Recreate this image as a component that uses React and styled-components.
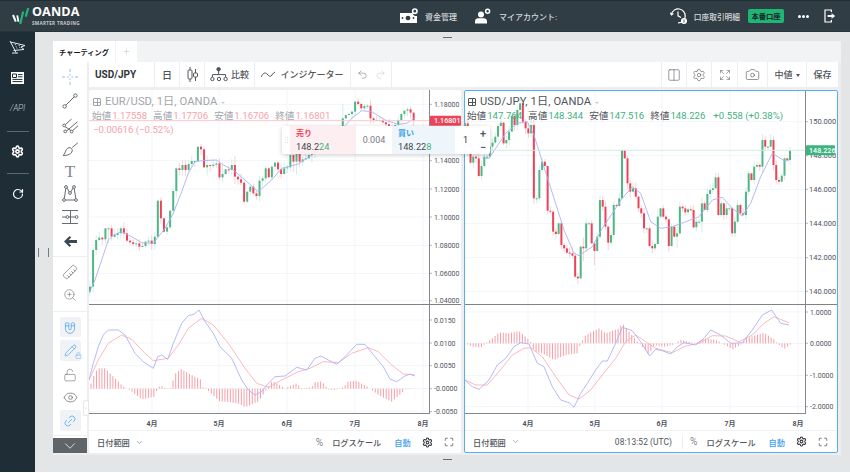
import React from 'react'
import styled, { createGlobalStyle } from 'styled-components'
import {
  Plus, Undo2, Redo2, Columns2, Settings, Expand, Maximize, Camera, ChevronDown, ChevronLeft,
  ZoomIn, Ruler, Magnet, LockOpen, Eye, Link2, RotateCw, Pencil, Lock,
} from 'lucide-react'

// chart data is read off the picture in 3x zoom coordinates, toPx brings it back to pane pixels
const UP = '#4fb786'
const DOWN = '#ec4359'

const eurCloses = [590, 480, 450, 443, 448, 415, 415, 440, 435, 430, 415, 430, 452, 457, 462, 460, 470, 468, 455, 452, 462, 440, 332, 385, 425, 412, 362, 303, 235, 240, 225, 240, 222, 213, 213, 170, 178, 232, 225, 228, 224, 220, 262, 252, 238, 240, 225, 260, 268, 278, 335, 305, 290, 310, 318, 272, 265, 235, 262, 230, 218, 238, 252, 235, 232, 195, 215, 190, 215, 208, 205, 195, 190, 175, 165, 150, 140, 130, 125, 120, 118, 110, 85, 75, 72, 65, 35, 42, 55, 48, 47, 85, 90, 92, 90, 97, 103, 108, 110, 105, 90, 72, 62, 58, 68, 93]
const jpyCloses = [100, 190, 218, 200, 205, 258, 228, 200, 200, 170, 158, 140, 108, 98, 160, 150, 125, 78, 105, 60, 40, 95, 115, 130, 105, 325, 325, 240, 215, 228, 362, 365, 425, 432, 400, 465, 475, 488, 490, 497, 560, 565, 470, 475, 400, 400, 460, 483, 440, 330, 350, 410, 458, 435, 345, 348, 325, 180, 205, 280, 305, 295, 320, 355, 370, 415, 415, 468, 475, 462, 380, 355, 380, 388, 468, 410, 440, 430, 350, 355, 367, 358, 360, 412, 395, 395, 340, 360, 312, 300, 295, 262, 375, 340, 375, 355, 355, 430, 395, 345, 370, 375, 305, 250, 270, 230, 225, 230, 150, 170, 170, 150, 225, 270, 275, 257, 205, 210, 180]

const eurMa = [[12, 610], [30, 570], [50, 510], [70, 450], [85, 435], [110, 425], [140, 440], [170, 458], [205, 460], [240, 415], [265, 370], [290, 305], [310, 250], [330, 215], [350, 212], [395, 210], [415, 225], [445, 240], [480, 270], [520, 305], [560, 270], [590, 235], [640, 222], [680, 195], [760, 130], [800, 85], [830, 62], [860, 65], [900, 90], [940, 103], [965, 100], [988, 85]]
const jpyMa = [[70, 205], [90, 205], [110, 175], [140, 130], [175, 100], [205, 95], [225, 135], [250, 215], [285, 325], [315, 420], [345, 490], [360, 497], [400, 470], [430, 415], [460, 370], [490, 325], [520, 290], [545, 310], [575, 395], [605, 415], [640, 410], [680, 395], [720, 380], [760, 330], [790, 322], [820, 355], [850, 378], [875, 340], [905, 260], [940, 190], [975, 212], [990, 212]]

const eurMacd = [[12, 240], [25, 190], [40, 140], [55, 105], [70, 90], [100, 90], [120, 105], [150, 160], [175, 185], [205, 205], [218, 170], [230, 165], [248, 178], [265, 130], [290, 70], [310, 47], [328, 42], [342, 30], [360, 65], [385, 100], [405, 140], [440, 175], [470, 240], [490, 270], [510, 285], [530, 275], [550, 250], [570, 230], [600, 228], [635, 202], [665, 210], [690, 175], [708, 168], [730, 180], [755, 193], [780, 170], [815, 133], [840, 133], [870, 170], [895, 200], [915, 237], [935, 245], [960, 228], [975, 222], [990, 228]]
const eurSignal = [[12, 240], [40, 180], [70, 130], [110, 105], [140, 118], [175, 155], [205, 182], [250, 175], [280, 135], [310, 85], [350, 55], [385, 75], [430, 130], [480, 205], [515, 250], [550, 262], [600, 235], [640, 215], [675, 205], [715, 185], [760, 188], [800, 160], [850, 143], [880, 155], [920, 195], [955, 222], [990, 225]]
const eurHist = [[15, 266], [20, 240], [38, 205], [60, 205], [85, 230], [110, 255], [125, 266], [135, 270], [170, 298], [210, 290], [218, 262], [230, 258], [250, 268], [258, 262], [270, 222], [288, 207], [320, 225], [350, 240], [355, 266], [365, 268], [405, 305], [425, 305], [465, 312], [480, 322], [520, 305], [545, 268], [560, 245], [570, 247], [600, 265], [635, 250], [650, 265], [680, 262], [690, 247], [710, 244], [730, 268], [750, 270], [775, 262], [790, 245], [815, 242], [850, 262], [880, 285], [920, 305], [950, 280], [960, 268], [990, 266]]
const jpyMacd = [[18, 240], [40, 260], [60, 268], [90, 240], [115, 195], [140, 175], [165, 140], [185, 128], [210, 132], [235, 190], [255, 200], [280, 260], [305, 300], [330, 308], [345, 322], [365, 280], [385, 250], [410, 210], [430, 183], [445, 183], [470, 130], [490, 82], [520, 92], [545, 125], [572, 168], [590, 148], [610, 152], [635, 162], [655, 140], [675, 128], [710, 135], [735, 115], [755, 90], [785, 105], [815, 130], [850, 128], [880, 90], [910, 45], [938, 30], [965, 70], [990, 75]]
const jpySignal = [[18, 240], [50, 255], [85, 255], [120, 215], [160, 165], [195, 145], [215, 143], [250, 170], [290, 230], [330, 285], [360, 297], [395, 270], [430, 225], [470, 175], [500, 125], [530, 105], [560, 125], [590, 145], [640, 158], [680, 138], [720, 130], [760, 107], [800, 108], [840, 125], [880, 105], [915, 70], [945, 50], [990, 68]]
const jpyHist = [[18, 130], [40, 140], [65, 143], [80, 130], [100, 115], [120, 97], [150, 100], [180, 93], [210, 120], [218, 130], [225, 155], [250, 160], [285, 180], [320, 165], [355, 160], [365, 130], [380, 105], [420, 85], [440, 100], [480, 85], [490, 70], [510, 95], [535, 125], [550, 140], [570, 165], [585, 135], [620, 140], [640, 135], [665, 120], [690, 125], [710, 130], [735, 115], [770, 120], [790, 130], [820, 148], [845, 135], [860, 115], [915, 98], [945, 118], [955, 130], [975, 147], [995, 133]]

const random = (seed) => {
  let s = seed
  return () => {
    s = (s * 16807) % 2147483647
    return s / 2147483647
  }
}

const makeCandles = (closes, first, last, seed) => {
  const rnd = random(seed)
  const step = (last - first) / (closes.length - 1)
  return closes.map((close, i) => {
    const open = i === 0 ? close + 15 : closes[i - 1]
    const r = rnd()
    const reach = r > 0.85 ? 45 : 18
    return {
      x: first + i * step,
      open,
      close,
      high: Math.min(open, close) - rnd() * reach,
      low: Math.max(open, close) + rnd() * reach,
    }
  })
}

const interp = (list, x) => {
  for (let i = 1; i < list.length; i++) {
    if (x <= list[i][0]) {
      const [x0, y0] = list[i - 1]
      const [x1, y1] = list[i]
      return y0 + ((x - x0) / (x1 - x0)) * (y1 - y0)
    }
  }
  return list[list.length - 1][1]
}

const toPoints = (list, ox, oy) => list.map(([x, y]) => `${(x / 3 - ox).toFixed(1)},${(y / 3 - oy).toFixed(1)}`).join(' ')

const GlobalStyle = createGlobalStyle`
  html, body { margin: 0; padding: 0; background: #fff; }
  body { font-family: Roboto, "Noto Sans CJK JP", sans-serif; }
  * { box-sizing: border-box; }
`

const Page = styled.div`
  position: relative;
  width: 850px;
  height: 472px;
  display: flex;
  flex-direction: column;
  overflow: hidden;
  font-family: Roboto, "Noto Sans CJK JP", sans-serif;
`

const TopBar = styled.header`
  height: 32px;
  flex: none;
  display: flex;
  align-items: center;
  padding: 0 15px 0 12px;
  background: #313d45;
  border-top: 1px solid #232e35;
  border-bottom: 1px solid #29343b;
  color: #d5d9dc;
`

const Logo = styled.div`
  display: flex;
  align-items: center;
  gap: 2px;
  width: 68px;
`

const LogoWord = styled.div`
  display: flex;
  flex-direction: column;
  color: #fff;
  font-family: "Open Sans", sans-serif;
  font-weight: 700;
  line-height: 1;
  white-space: nowrap;
`

const LogoName = styled.span`
  font-size: 12.6px;
  letter-spacing: 0.1px;
`

const LogoSub = styled.span`
  font-size: 4.6px;
  letter-spacing: 0.3px;
  margin-top: 2px;
  color: #c6cbce;
`

const BarGroup = styled.div`
  display: flex;
  align-items: center;
  margin-left: ${(p) => p.$ml || 0};
`

const BarText = styled.span`
  font-size: ${(p) => p.$size || '8px'};
  font-weight: 500;
  margin-left: ${(p) => p.$ml || '6px'};
  white-space: nowrap;
`

const LiveBadge = styled.span`
  width: 36px;
  height: 14px;
  margin-left: 8px;
  display: flex;
  align-items: center;
  justify-content: center;
  background: #1fb673;
  border-radius: 2px;
  color: #16242c;
  font-size: 7.3px;
  font-weight: 700;
`

const Dots = styled.span`
  display: flex;
  gap: 1px;
  margin: 0 15px 0 14px;

  i {
    width: 3px;
    height: 3px;
    border-radius: 50%;
    background: #fff;
  }
`

const Body = styled.div`
  flex: 1;
  display: flex;
  min-height: 0;
`

const Sidebar = styled.nav`
  width: 35px;
  flex: none;
  display: flex;
  flex-direction: column;
  align-items: center;
  background: #1f2d37;
  color: #fff;
`

const SideItem = styled.div`
  height: ${(p) => p.$h || 30}px;
  display: flex;
  align-items: center;
  justify-content: center;
`

const SideRule = styled.div`
  width: 22px;
  height: 1px;
  margin: 8px 0 5px;
  background: #5c6870;
`

const ApiMark = styled.span`
  font-size: 8.5px;
  font-style: italic;
  font-weight: 300;
  letter-spacing: -0.2px;
  color: #c2c8cc;
`

const Main = styled.main`
  position: relative;
  flex: 1;
  min-width: 0;
  display: flex;
  flex-direction: column;
  padding: 9px 9px 0 18px;
  background: #e4e5e7;
`

const Handle = styled.span`
  position: absolute;
  left: 408px;
  top: ${(p) => p.$top}px;
  width: 9px;
  height: 1px;
  background: #6a6e72;
`

const SplitGrip = styled.span`
  position: absolute;
  left: 3px;
  top: 216px;
  width: 11px;
  height: 9px;
  border-left: 1px solid #777b7f;
  border-right: 1px solid #777b7f;
`

const TabStrip = styled.div`
  height: 21px;
  flex: none;
  display: flex;
  background: #f2f3f4;
`

const Tab = styled.div`
  width: ${(p) => p.$w}px;
  margin-right: 1px;
  display: flex;
  align-items: center;
  justify-content: center;
  background: #fff;
  color: ${(p) => (p.$muted ? '#a8acb0' : '#16191c')};
  font-size: 7.2px;
  font-weight: 700;
  white-space: nowrap;
`

const Workspace = styled.div`
  flex: none;
  height: 393px;
  display: flex;
  gap: 2px;
  padding: 0 3px 2px 0;
  background: #eceef0;
`

const ToolColumn = styled.aside`
  position: relative;
  width: 34px;
  flex: none;
  display: flex;
  flex-direction: column;
  background: #fff;
  color: #666b71;
`

const ToolGroup = styled.div`
  display: flex;
  flex-direction: column;
  padding: ${(p) => p.$pad};
  border-bottom: 1px solid #eceef0;
`

const ToolButton = styled.div`
  height: ${(p) => p.$h || 24}px;
  margin: ${(p) => p.$m || 0};
  display: flex;
  align-items: center;
  justify-content: center;
  color: ${(p) => (p.$active ? '#4aa3ef' : 'inherit')};
  ${(p) => p.$active && 'width: 21px; align-self: center; border-radius: 2px; background: #f0f2f5;'}
`

const TextTool = styled.span`
  font-family: "Liberation Serif", serif;
  font-size: 17px;
  line-height: 1;
  color: #83878c;
`

const CollapseTools = styled.div`
  height: 15px;
  margin-top: 2px;
  display: flex;
  align-items: center;
  justify-content: center;
  background: #5f6468;
  color: #fff;
`

const SideTab = styled.span`
  position: absolute;
  left: 30px;
  top: 338px;
  width: 6px;
  height: 16px;
  display: flex;
  align-items: center;
  justify-content: center;
  background: #fff;
  border: 1px solid #e4e6e8;
  border-radius: 2px;
  color: #9a9ea3;
`

const Content = styled.div`
  flex: 1;
  min-width: 0;
  display: flex;
  flex-direction: column;
  gap: 3px;
`

const Toolbar = styled.div`
  height: 25px;
  flex: none;
  display: flex;
  gap: 1px;
`

const ToolbarCell = styled.div`
  width: ${(p) => (p.$w ? `${p.$w}px` : 'auto')};
  flex: ${(p) => (p.$w ? 'none' : 1)};
  display: flex;
  align-items: center;
  justify-content: ${(p) => p.$justify || 'center'};
  gap: ${(p) => p.$gap || 4}px;
  padding: ${(p) => p.$pad || 0};
  background: #fff;
  color: #50555b;
  font-size: ${(p) => p.$size || 9}px;
  font-weight: 500;
  white-space: nowrap;
`

const Symbol = styled.span`
  font-size: 10px;
  font-weight: 700;
  color: #30353a;
`

const Charts = styled.div`
  position: relative;
  flex: none;
  height: 363px;
  display: flex;
  gap: 3px;
`

const Panel = styled.section`
  flex: 1;
  min-width: 0;
  display: flex;
  flex-direction: column;
  background: #fff;
  border-radius: 2px;
  border: ${(p) => (p.$focus ? '1px solid #58aef0' : 'none')};
`

const Pane = styled.div`
  position: relative;
  height: ${(p) => p.$h}px;
  flex: none;
`

const PaneRule = styled.div`
  height: 1px;
  flex: none;
  background: #7f8288;
`

const PlotSvg = styled.svg`
  display: block;
`

const AxisText = styled.text`
  font-family: Roboto, sans-serif;
  font-size: ${(p) => p.$size || 7}px;
  fill: #50535e;
`

const PriceTag = styled.text`
  font-family: Roboto, sans-serif;
  font-size: 7.2px;
  font-weight: 500;
  fill: #fff;
`

const MonthText = styled.text`
  font-family: Roboto, "Noto Sans CJK JP", sans-serif;
  font-size: 7px;
  font-weight: 700;
  fill: #50535e;
  text-anchor: middle;
`

const Legend = styled.div`
  position: absolute;
  left: ${(p) => p.$left}px;
  top: ${(p) => p.$top}px;
  font-size: 9.6px;
  line-height: 13.5px;
  white-space: nowrap;
  color: ${(p) => (p.$faded ? '#a2a6ab' : '#50555b')};
`

const LegendTitle = styled.div`
  display: flex;
  align-items: center;
  gap: 4px;
  height: 14px;
  font-size: 11.2px;
  letter-spacing: 0.1px;
`

const LegendBox = styled.span`
  width: 8px;
  height: 8px;
  margin-left: 1px;
  position: relative;
  border: 1px solid currentColor;
  border-radius: 1px;
  background:
    linear-gradient(currentColor, currentColor) center / 100% 1px no-repeat,
    linear-gradient(currentColor, currentColor) center / 1px 100% no-repeat;
`

const Caret = styled.span`
  width: 0;
  height: 0;
  margin-top: 1px;
  border-style: solid;
  border-color: ${(p) => p.$color || '#c8cbce'} transparent transparent;
  border-width: ${(p) => (p.$big ? '3px 2.5px 0' : '2.5px 2px 0')};
`

const Ohlc = styled.div`
  display: flex;
  gap: 6px;
`

const OhlcPair = styled.span`
  display: inline-flex;
  gap: 1px;
`

const Value = styled.span`
  color: ${(p) => p.$color};
  margin-left: ${(p) => p.$ml || 0};
`

const TimeScale = styled.div`
  height: 16px;
  flex: none;
  margin-top: 1px;
`

const Footer = styled.div`
  height: 22px;
  flex: 1;
  display: flex;
  align-items: center;
  padding: 0 9px 0 8px;
  border-top: 1px solid #eff1f3;
  color: #50555b;
  font-size: 8.2px;
  font-weight: 500;
`

const FootItem = styled.span`
  display: inline-flex;
  align-items: center;
  gap: 5px;
  margin-left: ${(p) => p.$ml || 0}px;
  color: ${(p) => p.$color || 'inherit'};
  white-space: nowrap;
`

const Percent = styled(FootItem)`
  font-size: 10px;
  font-weight: 300;
`

const FootDivider = styled.span`
  width: 1px;
  height: 14px;
  margin-left: 10px;
  background: #eceef0;
`

const Clock = styled.span`
  margin-left: auto;
  font-size: 8.4px;
  font-weight: 400;
  letter-spacing: 0.1px;
`

const Ticket = styled.div`
  position: absolute;
  z-index: 2;
  left: 193px;
  top: 36px;
  width: 208px;
  height: 28px;
  display: grid;
  grid-template-columns: 8px 66px 36px 63px 21px 14px;
  background: #fff;
  border-radius: 2px;
  box-shadow: 0 1px 4px rgba(60, 70, 80, 0.28);
`

const Grip = styled.span`
  margin: 10px 2px;
  background: radial-gradient(circle, #cfd2d5 0.6px, transparent 0.8px) 0 0 / 2.4px 2.6px;
`

const Side = styled.div`
  display: flex;
  flex-direction: column;
  justify-content: center;
  padding-left: 6px;
  background: ${(p) => p.$bg};
  font-size: 9.2px;
  line-height: 13px;
  color: #43484e;
`

const SideLabel = styled.span`
  font-size: 8px;
  font-weight: 700;
  color: ${(p) => p.$color};
`

const Spread = styled.div`
  display: flex;
  align-items: center;
  justify-content: center;
  font-size: 9px;
  color: #777c82;
`

const Quantity = styled(Spread)`
  color: #30353a;
`

const Stepper = styled.div`
  display: grid;
  grid-template-rows: 1fr 1fr;
  color: #50555b;
  font-size: 11px;
  font-weight: 500;
  line-height: 1;

  span {
    display: flex;
    align-items: center;
    justify-content: center;
  }
`

const PencilLockWrap = styled.span`
  position: relative;
  display: flex;

  svg:last-child {
    position: absolute;
    right: -5px;
    bottom: -2px;
  }
`

const Tilted = styled.span`
  display: flex;
  transform: rotate(${(p) => p.$deg}deg);
`

const LogoMark = () => (
  <svg width="18" height="18" viewBox="12 6 18 18" fill="none" strokeLinecap="butt">
    <path d="M13 14l2.8 6.6" stroke="#fff" strokeWidth="2" />
    <path d="M17.2 14.4l1.3 6.4" stroke="#fff" strokeWidth="1.8" />
    <path d="M23.2 10.5l-3 12.5" stroke="#21b573" strokeWidth="2.2" />
    <path d="M28.2 7l-2.4 8.6" stroke="#21b573" strokeWidth="2.2" />
  </svg>
)

const WalletIcon = () => (
  <svg width="18" height="16" viewBox="0 0 18 16">
    <path d="M0 5h12.5a4 4 0 0 0 4.5 3v7H0z" fill="#fff" />
    <ellipse cx="8" cy="10" rx="2.4" ry="2.2" fill="#313d45" />
    <circle cx="2.5" cy="10" r="0.9" fill="#313d45" />
    <circle cx="13.5" cy="10" r="0.9" fill="#313d45" />
    <circle cx="14.8" cy="3.2" r="2.2" fill="none" stroke="#fff" strokeWidth="1.6" />
  </svg>
)

const UserIcon = () => (
  <svg width="16" height="16" viewBox="0 0 16 16" fill="#fff">
    <circle cx="6" cy="6.6" r="3" />
    <path d="M0 15.5v-2.3c0-2 1.6-3 3-3h6c1.4 0 3 1 3 3v2.3z" />
    <circle cx="12.6" cy="3.2" r="2" fill="none" stroke="#fff" strokeWidth="1.5" />
  </svg>
)

const HistoryIcon = () => (
  <svg width="18" height="18" viewBox="0 0 18 18" fill="none" stroke="#fff" strokeWidth="1.2">
    <path d="M1.4 7.4a7 7 0 1 1 6.6 8.5" />
    <path d="M0.2 5.8l1.3 2 1.9-1.3" />
    <path d="M8 4.4v4.4l3 1.8" />
    <circle cx="14" cy="14" r="3" fill="#fff" stroke="none" />
    <path d="M14 12.4v3.2" stroke="#313d45" strokeWidth="0.8" />
  </svg>
)

const ExitIcon = () => (
  <svg width="11" height="14" viewBox="0 0 11 14" fill="none" stroke="#fff" strokeWidth="1.2">
    <path d="M7.4 3V1H1v12h6.4v-2" />
    <path d="M3.6 7h6.6" strokeWidth="2" />
    <path d="M7.6 4.4L10.6 7l-3 2.6" fill="#fff" strokeWidth="0.6" />
  </svg>
)

const FlagIcon = () => (
  <svg width="17" height="14" viewBox="0 0 17 14" fill="none" stroke="#e8ebed" strokeWidth="1">
    <path d="M1 1l6 11.5M3 13h6" />
    <path d="M1.5 2L16 5.5 12 7l3 2.5-10.5 1" />
    <path d="M6 4l2 4.5M10 5l1 3" strokeDasharray="1 1" />
  </svg>
)

const NewsIcon = () => (
  <svg width="13" height="12" viewBox="0 0 13 12">
    <path d="M0 0h13v12H0z" fill="#fff" />
    <path d="M1.5 2h4v3.5h-4zM7 2.6h4.5M7 4.8h4.5M1.5 7.4h10M1.5 9.6h10" stroke="#1f2d37" strokeWidth="1" fill="none" />
  </svg>
)

const CrosshairIcon = () => (
  <svg width="16" height="16" viewBox="0 0 16 16" stroke="#7dbcf3" strokeWidth="0.9" fill="none">
    <path d="M8 0v3M8 5v1.5M8 9.5V11M8 13v3M0 8h3M5 8h1.5M9.5 8H11M13 8h3" />
  </svg>
)

const TrendIcon = () => (
  <svg width="16" height="16" viewBox="0 0 16 16" stroke="currentColor" strokeWidth="1" fill="none">
    <circle cx="2.6" cy="13.4" r="1.7" />
    <circle cx="13.4" cy="2.6" r="1.7" />
    <path d="M3.9 12.1l8.2-8.2" />
  </svg>
)

const ForkIcon = () => (
  <svg width="17" height="17" viewBox="0 0 17 17" stroke="currentColor" strokeWidth="1" fill="none">
    <circle cx="2.2" cy="8.4" r="1.4" />
    <circle cx="3.2" cy="14.4" r="1.4" />
    <circle cx="9.6" cy="14.6" r="1.4" />
    <path d="M3.4 7.6L9.6 2M4.6 14L15.4 4.8M10.6 13.6L16 8.8M3 9.6l6 4" />
  </svg>
)

const BrushIcon = () => (
  <svg width="17" height="16" viewBox="0 0 17 16" stroke="currentColor" strokeWidth="1" fill="none">
    <path d="M1 14.5c2-1 2-4 3.6-6.2C6 6.6 8 6 9.4 7.4c1.4 1.4 1 3.4-.6 5-1.8 1.6-5 2.2-7.8 2.1z" />
    <path d="M10.2 6.6l5.6-4.8" />
  </svg>
)

const NodesIcon = () => (
  <svg width="16" height="17" viewBox="0 0 16 17" stroke="currentColor" strokeWidth="1" fill="none">
    <circle cx="2" cy="15" r="1.4" />
    <circle cx="4" cy="2" r="1.4" />
    <circle cx="8" cy="8" r="1.4" />
    <circle cx="12" cy="2" r="1.4" />
    <circle cx="14" cy="15" r="1.4" />
    <path d="M2.3 13.6L3.8 3.4M5 3l2.2 3.9M8.8 6.9L11.1 3M12.2 3.4l1.6 10.2M3.4 15h9.2" />
  </svg>
)

const FilterIcon = () => (
  <svg width="17" height="16" viewBox="0 0 17 16" stroke="currentColor" strokeWidth="1" fill="none">
    <path d="M0 1.5h16M0 8h4M7 8h6M0 14.5h16M8.5 1.5v13" />
    <circle cx="5.4" cy="8" r="1.4" />
    <circle cx="14.6" cy="8" r="1.4" />
  </svg>
)

const BackArrow = () => (
  <svg width="13" height="11" viewBox="0 0 13 11" fill="#3d4a54">
    <path d="M5.6 0L0 5.5 5.6 11l1.6-1.6-2.4-2.5H13V4.1H4.8l2.4-2.5z" />
  </svg>
)

const CandleIcon = () => (
  <svg width="11" height="15" viewBox="0 0 11 15" stroke="#50555b" strokeWidth="1" fill="none">
    <path d="M3 0v3M3 12v3M8.5 2v4M8.5 10v4" />
    <rect x="1" y="3" width="4" height="9" rx="1" />
    <rect x="6.5" y="6" width="4" height="4" rx="1" />
  </svg>
)

const CompareIcon = () => (
  <svg width="18" height="15" viewBox="0 0 18 15" stroke="#50555b" strokeWidth="1" fill="none">
    <circle cx="8.6" cy="2.2" r="1.7" fill="#50555b" />
    <circle cx="2.4" cy="12" r="1.7" />
    <circle cx="9" cy="12" r="1.7" />
    <circle cx="15.6" cy="12" r="1.7" />
    <path d="M8.6 4v3.4M2.4 10V7.6h13.2V10" />
  </svg>
)

const WaveIcon = () => (
  <svg width="14" height="7" viewBox="0 0 14 7" stroke="#50555b" strokeWidth="1" fill="none">
    <path d="M0 6c2-4 4-5 6-3s3 3 4 2 2-3 4-4" />
  </svg>
)

const PencilLock = () => (
  <PencilLockWrap>
    <Pencil size={13} strokeWidth={1.3} />
    <Lock size={7} strokeWidth={1.4} />
  </PencilLockWrap>
)

const Candles = ({ data, ox, oy }) => (
  <g>
    {data.map((c) => {
      const color = c.close <= c.open ? UP : DOWN
      const x = c.x / 3 - ox
      const top = Math.min(c.open, c.close) / 3 - oy
      const height = Math.max(Math.abs(c.open - c.close) / 3, 1)
      return (
        <g key={c.x}>
          <line x1={x} x2={x} y1={c.high / 3 - oy} y2={c.low / 3 - oy} stroke={color} strokeOpacity="0.3" strokeWidth="0.8" />
          <rect x={x - 1} y={top} width="2" height={height} fill={color} />
        </g>
      )
    })}
  </g>
)

const PriceChart = ({ w, h, ox, oy, candles, ma, ticks, tickSize, labelX, months, last }) => (
  <PlotSvg width={w} height={h}>
    {months.map((x) => <line key={x} x1={x} x2={x} y1="0" y2={h} stroke="#f2f5f8" />)}
    {ticks.map(([y]) => <line key={y} x1="0" x2="340" y1={y / 3 - oy} y2={y / 3 - oy} stroke="#f2f5f8" />)}
    <Candles data={candles} ox={ox} oy={oy} />
    <polyline points={toPoints(ma, ox, oy)} fill="none" stroke="#aab2f4" strokeWidth="0.9" />
    <line x1="0" x2="340" y1={last.y / 3 - oy} y2={last.y / 3 - oy} stroke={last.line} />
    <line x1="340.5" x2="340.5" y1="0" y2={h} stroke="#85888e" />
    {ticks.map(([y, label]) => (
      <g key={label}>
        <line x1="340" x2="343" y1={y / 3 - oy} y2={y / 3 - oy} stroke="#85888e" strokeWidth="0.6" />
        <AxisText x={labelX} y={y / 3 - oy + 2.5} $size={tickSize}>{label}</AxisText>
      </g>
    ))}
    <rect x="341" y={last.y / 3 - oy - 5} width={w - 342} height="10" rx="1" fill={last.bg} />
    <PriceTag x={labelX} y={last.y / 3 - oy + 2.6}>{last.label}</PriceTag>
  </PlotSvg>
)

const MacdChart = ({ w, ox, oy, macd, signal, hist, base, ticks, labelX, months }) => {
  const bars = []
  for (let x = 18; x < 996; x += 8.2) bars.push(x)
  return (
    <PlotSvg width={w} height="109">
      {months.map((x) => <line key={x} x1={x} x2={x} y1="0" y2="108" stroke="#f2f5f8" />)}
      {ticks.map(([y]) => <line key={y} x1="0" x2="340" y1={y / 3 - oy} y2={y / 3 - oy} stroke="#f2f5f8" />)}
      {bars.map((x) => (
        <line key={x} x1={x / 3 - ox} x2={x / 3 - ox} y1={base / 3 - oy} y2={interp(hist, x) / 3 - oy} stroke="#f79ea7" strokeWidth="1" />
      ))}
      <polyline points={toPoints(signal, ox, oy)} fill="none" stroke="#f9b1b8" strokeWidth="0.9" />
      <polyline points={toPoints(macd, ox, oy)} fill="none" stroke="#aab2f8" strokeWidth="0.9" />
      <line x1="340.5" x2="340.5" y1="0" y2="108" stroke="#85888e" />
      <line x1="0" x2="341" y1="108.5" y2="108.5" stroke="#85888e" />
      {ticks.map(([y, label]) => (
        <g key={label}>
          <line x1="340" x2="343" y1={y / 3 - oy} y2={y / 3 - oy} stroke="#85888e" strokeWidth="0.6" />
          <AxisText x={labelX} y={y / 3 - oy + 2.5}>{label}</AxisText>
        </g>
      ))}
    </PlotSvg>
  )
}

const MonthAxis = ({ months }) => (
  <PlotSvg width="340" height="16">
    {months.map((x, i) => <MonthText key={x} x={x} y="11.5">{4 + i}月</MonthText>)}
  </PlotSvg>
)

const ChartFooter = ({ clock }) => (
  <Footer>
    <FootItem>日付範囲<ChevronDown size={9} strokeWidth={1.2} /></FootItem>
    {clock ? <Clock>{clock}</Clock> : null}
    {clock ? <FootDivider /> : null}
    <Percent $ml={clock ? 7 : 172}>%</Percent>
    <FootItem $ml={9}>ログスケール</FootItem>
    <FootItem $ml={13} $color="#3d9eea">自動</FootItem>
    <FootItem $ml={11}><Settings size={11} strokeWidth={2.2} color="#30353a" /></FootItem>
    <FootItem $ml={11}><Maximize size={10} strokeWidth={1.6} color="#30353a" /></FootItem>
  </Footer>
)

const eurMonths = [63, 130, 198, 266, 334]
const jpyMonths = [63, 130, 197, 265, 333]

const eurLegendColor = '#f8a1aa'
const jpyLegendColor = '#3fb27f'

export default function App() {
  const eurCandles = makeCandles(eurCloses, 15, 986, 91)
  const jpyCandles = makeCandles(jpyCloses, 18, 993, 4711)

  return (
    <>
      <GlobalStyle />
      <Page>
        <TopBar>
          <Logo>
            <LogoMark />
            <LogoWord>
              <LogoName>OANDA</LogoName>
              <LogoSub>SMARTER TRADING</LogoSub>
            </LogoWord>
          </Logo>
          <BarGroup $ml="320px">
            <WalletIcon />
            <BarText $ml="7px">資金管理</BarText>
          </BarGroup>
          <BarGroup $ml="18px">
            <UserIcon />
            <BarText $ml="8px">マイアカウント:</BarText>
          </BarGroup>
          <BarGroup $ml="auto">
            <HistoryIcon />
            <BarText $size="7.7px">口座取引明細</BarText>
            <LiveBadge>本番口座</LiveBadge>
            <Dots><i /><i /><i /></Dots>
            <ExitIcon />
          </BarGroup>
        </TopBar>
        <Body>
          <Sidebar>
            <SideItem><FlagIcon /></SideItem>
            <SideItem $h={31}><NewsIcon /></SideItem>
            <SideItem><ApiMark>/API</ApiMark></SideItem>
            <SideRule />
            <SideItem $h={28}><Settings size={13} strokeWidth={3} /></SideItem>
            <SideRule />
            <SideItem><RotateCw size={12} strokeWidth={2.4} /></SideItem>
          </Sidebar>
          <Main>
            <Handle $top={5} />
            <Handle $top={427} />
            <SplitGrip />
            <TabStrip>
              <Tab $w={62}>チャーティング</Tab>
              <Tab $w={21} $muted><Plus size={9} strokeWidth={1} /></Tab>
            </TabStrip>
            <Workspace>
              <ToolColumn>
                <ToolGroup $pad="3px 0">
                  <ToolButton><CrosshairIcon /></ToolButton>
                  <ToolButton><TrendIcon /></ToolButton>
                  <ToolButton><ForkIcon /></ToolButton>
                  <ToolButton><BrushIcon /></ToolButton>
                  <ToolButton $h={20}><TextTool>T</TextTool></ToolButton>
                  <ToolButton><NodesIcon /></ToolButton>
                  <ToolButton><FilterIcon /></ToolButton>
                  <ToolButton><BackArrow /></ToolButton>
                </ToolGroup>
                <ToolGroup $pad="3px 0 5px">
                  <ToolButton><Tilted $deg={90}><Ruler size={16} strokeWidth={1} /></Tilted></ToolButton>
                  <ToolButton $h={22}><ZoomIn size={14} strokeWidth={1} /></ToolButton>
                </ToolGroup>
                <ToolGroup $pad="5px 0 4px">
                  <ToolButton $h={20} $active><Tilted $deg={135}><Magnet size={14} strokeWidth={1.2} /></Tilted></ToolButton>
                  <ToolButton $h={21} $m="3px 0 0" $active><PencilLock /></ToolButton>
                  <ToolButton $m="2px 0 0"><LockOpen size={14} strokeWidth={1} /></ToolButton>
                  <ToolButton $h={20}><Eye size={15} strokeWidth={1.2} /></ToolButton>
                  <ToolButton $h={21} $m="3px 0 0" $active><Tilted $deg={-45}><Link2 size={14} strokeWidth={1.2} /></Tilted></ToolButton>
                </ToolGroup>
                <CollapseTools><ChevronDown size={18} strokeWidth={1} /></CollapseTools>
                <SideTab><ChevronLeft size={6} strokeWidth={1.5} /></SideTab>
              </ToolColumn>
              <Content>
                <Toolbar>
                  <ToolbarCell $w={65} $justify="flex-start" $pad="0 0 0 6px"><Symbol>USD/JPY</Symbol></ToolbarCell>
                  <ToolbarCell $w={24} $size={10}>日</ToolbarCell>
                  <ToolbarCell $w={24}><CandleIcon /></ToolbarCell>
                  <ToolbarCell $w={49} $gap={3}><CompareIcon />比較</ToolbarCell>
                  <ToolbarCell $w={95} $gap={5}><WaveIcon />インジケーター</ToolbarCell>
                  <ToolbarCell $w={40} $gap={7}>
                    <Undo2 size={11} strokeWidth={1.2} color="#70757a" />
                    <Redo2 size={11} strokeWidth={1.2} color="#c6c9cc" />
                  </ToolbarCell>
                  <ToolbarCell />
                  <ToolbarCell $w={24}><Columns2 size={14} strokeWidth={1} /></ToolbarCell>
                  <ToolbarCell $w={24}><Settings size={14} strokeWidth={1} /></ToolbarCell>
                  <ToolbarCell $w={25}><Expand size={12} strokeWidth={1} /></ToolbarCell>
                  <ToolbarCell $w={29}><Camera size={15} strokeWidth={1} /></ToolbarCell>
                  <ToolbarCell $w={38} $gap={3}>中値<Caret $color="#50555b" $big /></ToolbarCell>
                  <ToolbarCell $w={31}>保存</ToolbarCell>
                </Toolbar>
                <Charts>
                  <Panel>
                    <Pane $h={214}>
                      <PriceChart
                        w={373}
                        h={214}
                        ox={4}
                        oy={0}
                        candles={eurCandles}
                        ma={eurMa}
                        months={eurMonths}
                        tickSize={7}
                        labelX={345}
                        ticks={[[43, '1.18000'], [212, '1.14000'], [297, '1.12000'], [381, '1.10000'], [466, '1.08000'], [550, '1.06000'], [632, '1.04000']]}
                        last={{ y: 92, label: '1.16801', bg: '#ee4258', line: '#fbc6cc' }}
                      />
                      <Legend $left={3} $top={5} $faded>
                        <LegendTitle><LegendBox />EUR/USD, 1日, OANDA<Caret /></LegendTitle>
                        <Ohlc>
                          <OhlcPair>始値<Value $color={eurLegendColor}>1.17558</Value></OhlcPair>
                          <OhlcPair>高値<Value $color={eurLegendColor}>1.17706</Value></OhlcPair>
                          <OhlcPair>安値<Value $color={eurLegendColor}>1.16706</Value></OhlcPair>
                          <OhlcPair>終値<Value $color={eurLegendColor}>1.16801</Value></OhlcPair>
                        </Ohlc>
                        <Value $color={eurLegendColor} $ml="1px">−0.00616 (−0.52%)</Value>
                      </Legend>
                    </Pane>
                    <PaneRule />
                    <Pane $h={108}>
                      <MacdChart
                        w={373}
                        ox={4}
                        oy={5}
                        macd={eurMacd}
                        signal={eurSignal}
                        hist={eurHist}
                        base={266}
                        months={eurMonths}
                        labelX={345}
                        ticks={[[60, '0.0150'], [129, '0.0100'], [197, '0.0050'], [266, '-0.0000'], [335, '-0.0050']]}
                      />
                    </Pane>
                    <TimeScale><MonthAxis months={eurMonths} /></TimeScale>
                    <ChartFooter />
                  </Panel>
                  <Panel $focus>
                    <Pane $h={213}>
                      <PriceChart
                        w={371}
                        h={213}
                        ox={6}
                        oy={1}
                        candles={jpyCandles}
                        ma={jpyMa}
                        months={jpyMonths}
                        tickSize={7.5}
                        labelX={344}
                        ticks={[[95, '150.000'], [197, '148.000'], [298, '146.000'], [400, '144.000'], [503, '142.000'], [604, '140.000']]}
                        last={{ y: 181, label: '148.226', bg: '#3db37f', line: '#cdeee0' }}
                      />
                      <Legend $left={2} $top={4}>
                        <LegendTitle><LegendBox />USD/JPY, 1日, OANDA<Caret /></LegendTitle>
                        <Ohlc>
                          <OhlcPair>始値<Value $color={jpyLegendColor}>147.764</Value></OhlcPair>
                          <OhlcPair>高値<Value $color={jpyLegendColor}>148.344</Value></OhlcPair>
                          <OhlcPair>安値<Value $color={jpyLegendColor}>147.516</Value></OhlcPair>
                          <OhlcPair>終値<Value $color={jpyLegendColor}>148.226</Value></OhlcPair>
                          <Value $color={jpyLegendColor} $ml="2px">+0.558 (+0.38%)</Value>
                        </Ohlc>
                      </Legend>
                    </Pane>
                    <PaneRule />
                    <Pane $h={108}>
                      <MacdChart
                        w={371}
                        ox={6}
                        oy={5}
                        macd={jpyMacd}
                        signal={jpySignal}
                        hist={jpyHist}
                        base={130}
                        months={jpyMonths}
                        labelX={345}
                        ticks={[[36, '1.0000'], [130, '0.0000'], [226, '-1.0000'], [320, '-2.0000']]}
                      />
                    </Pane>
                    <TimeScale><MonthAxis months={jpyMonths} /></TimeScale>
                    <ChartFooter clock="08:13:52 (UTC)" />
                  </Panel>
                  <Ticket>
                    <Grip />
                    <Side $bg="#fdeff1">
                      <SideLabel $color="#ee4258">売り</SideLabel>
                      <span>148.2<Value $color="#3fb27f">24</Value></span>
                    </Side>
                    <Spread>0.004</Spread>
                    <Side $bg="#eff6fb">
                      <SideLabel $color="#3d9eea">買い</SideLabel>
                      <span>148.22<Value $color="#3fb27f">8</Value></span>
                    </Side>
                    <Quantity>1</Quantity>
                    <Stepper><span>+</span><span>−</span></Stepper>
                  </Ticket>
                </Charts>
              </Content>
            </Workspace>
          </Main>
        </Body>
      </Page>
    </>
  )
}
